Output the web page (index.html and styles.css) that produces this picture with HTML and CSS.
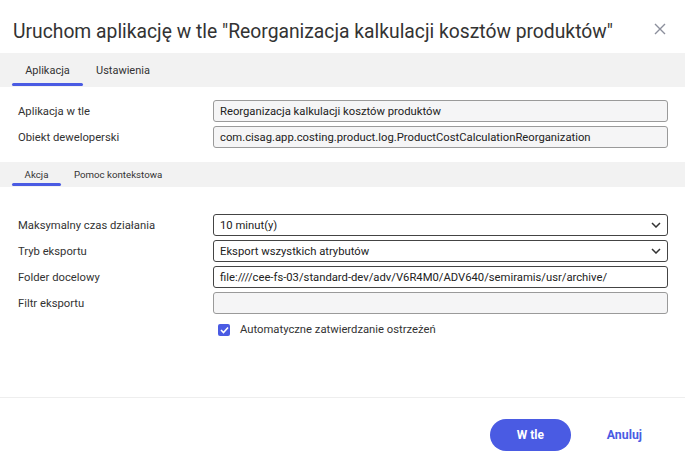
FILE: index.html
```html
<!DOCTYPE html>
<html lang="pl">
<head>
<meta charset="utf-8">
<title>Dialog</title>
<link rel="stylesheet" href="styles.css">
</head>
<body>
<div class="dialog">
  <div class="header">
    <h1 class="title">Uruchom aplikację w tle "Reorganizacja kalkulacji kosztów produktów"</h1>
    <button class="close" aria-label="Zamknij">
      <svg width="12" height="12" viewBox="0 0 12 12"><path d="M1 1 L11 11 M11 1 L1 11" stroke="#8c8f9c" stroke-width="1.4" fill="none"/></svg>
    </button>
  </div>
  <div class="tabs tabs-main">
    <div class="tab active">Aplikacja</div>
    <div class="tab">Ustawienia</div>
  </div>
  <div class="form form-top">
    <label class="label">Aplikacja w tle</label>
    <div class="field readonly">Reorganizacja kalkulacji kosztów produktów</div>
    <label class="label">Obiekt deweloperski</label>
    <div class="field readonly">com.cisag.app.costing.product.log.ProductCostCalculationReorganization</div>
  </div>
  <div class="tabs tabs-sub">
    <div class="tab active">Akcja</div>
    <div class="tab">Pomoc kontekstowa</div>
  </div>
  <div class="form form-bottom">
    <label class="label">Maksymalny czas działania</label>
    <div class="field select"><span>10 minut(y)</span>
      <svg class="chev" width="10" height="6" viewBox="0 0 10 6"><path d="M1 1 L5 5 L9 1" stroke="#333" stroke-width="1.5" fill="none"/></svg></div>
    <label class="label">Tryb eksportu</label>
    <div class="field select"><span>Eksport wszystkich atrybutów</span>
      <svg class="chev" width="10" height="6" viewBox="0 0 10 6"><path d="M1 1 L5 5 L9 1" stroke="#333" stroke-width="1.5" fill="none"/></svg></div>
    <label class="label">Folder docelowy</label>
    <div class="field">file:////cee-fs-03/standard-dev/adv/V6R4M0/ADV640/semiramis/usr/archive/</div>
    <label class="label">Filtr eksportu</label>
    <div class="field readonly"></div>
    <div class="spacer"></div>
    <div class="check-row">
      <span class="checkbox">
        <svg width="9" height="8" viewBox="0 0 9 8"><path d="M1 4 L3.5 6.5 L8 1.5" stroke="#fff" stroke-width="1.6" fill="none"/></svg>
      </span>
      <span class="check-label">Automatyczne zatwierdzanie ostrzeżeń</span>
    </div>
  </div>
  <div class="footer">
    <button class="btn-primary">W tle</button>
    <button class="btn-link">Anuluj</button>
  </div>
</div>
</body>
</html>
```
FILE: styles.css
```css
* { box-sizing: border-box; }
html, body { margin: 0; padding: 0; background: #fff; }
body { font-family: Roboto, "Noto Sans", sans-serif; color: #333; }
.dialog { width: 685px; height: 467px; display: flex; flex-direction: column; }
.header { height: 53px; display: flex; align-items: center; justify-content: space-between; padding: 0 19px 0 13px; }
.title { margin: 0; font-size: 19.3px; font-weight: 400; color: #333; padding-top: 10px; }
.close { border: 0; background: none; padding: 0; width: 12px; height: 12px; display: flex; margin-top: 4px; }
.tabs { background: #f2f2f2; display: flex; padding-left: 12px; }
.tabs-main { height: 34px; }
.tabs-sub { height: 25px; margin-top: 14px; }
.tab { position: relative; display: flex; align-items: center; justify-content: center; color: #333; }
.tabs-main .tab { font-size: 11px; padding: 0 13px; }
.tabs-main .tab.active { width: 71px; }
.tabs-sub .tab { font-size: 9.7px; padding: 0 13px; }
.tabs-sub .tab.active { width: 49px; }
.tab.active::after { content: ""; position: absolute; left: 0; right: 0; bottom: 1px; height: 3px; border-radius: 2px; background: #4a5be3; }
.form { display: grid; grid-template-columns: 195px 455px; row-gap: 4px; padding-left: 18px; }
.form-top { margin-top: 13px; }
.form-bottom { margin-top: 27px; }
.label { font-size: 11.25px; color: #333; display: flex; align-items: center; height: 22px; }
.field { height: 22px; border: 1px solid #444; border-radius: 3px; background: #fff; font-size: 11.25px; color: #222; padding: 0 6px; display: flex; align-items: center; white-space: nowrap; }
.field.readonly { background: #f5f5f6; border-color: #9a9a9a; }
.field.select { justify-content: space-between; }
.check-row { display: flex; align-items: center; gap: 10px; padding-left: 5px; margin-top: 5px; }
.checkbox { width: 12px; height: 12px; border-radius: 2px; background: #4a5be3; display: flex; align-items: center; justify-content: center; }
.check-label { font-size: 11.25px; color: #333; }
.footer { margin-top: auto; border-top: 1px solid #eeeeee; height: 70px; display: flex; align-items: flex-start; justify-content: flex-end; padding: 21px 43px 0 0; gap: 36px; }
.btn-primary { width: 81px; height: 32px; border: 0; border-radius: 16px; background: #4a5be3; color: #fff; font-family: Roboto, sans-serif; font-weight: 700; font-size: 12px; }
.btn-link { border: 0; background: none; color: #4a5be3; font-family: Roboto, sans-serif; font-weight: 700; font-size: 12.3px; height: 32px; padding: 0; }
```
